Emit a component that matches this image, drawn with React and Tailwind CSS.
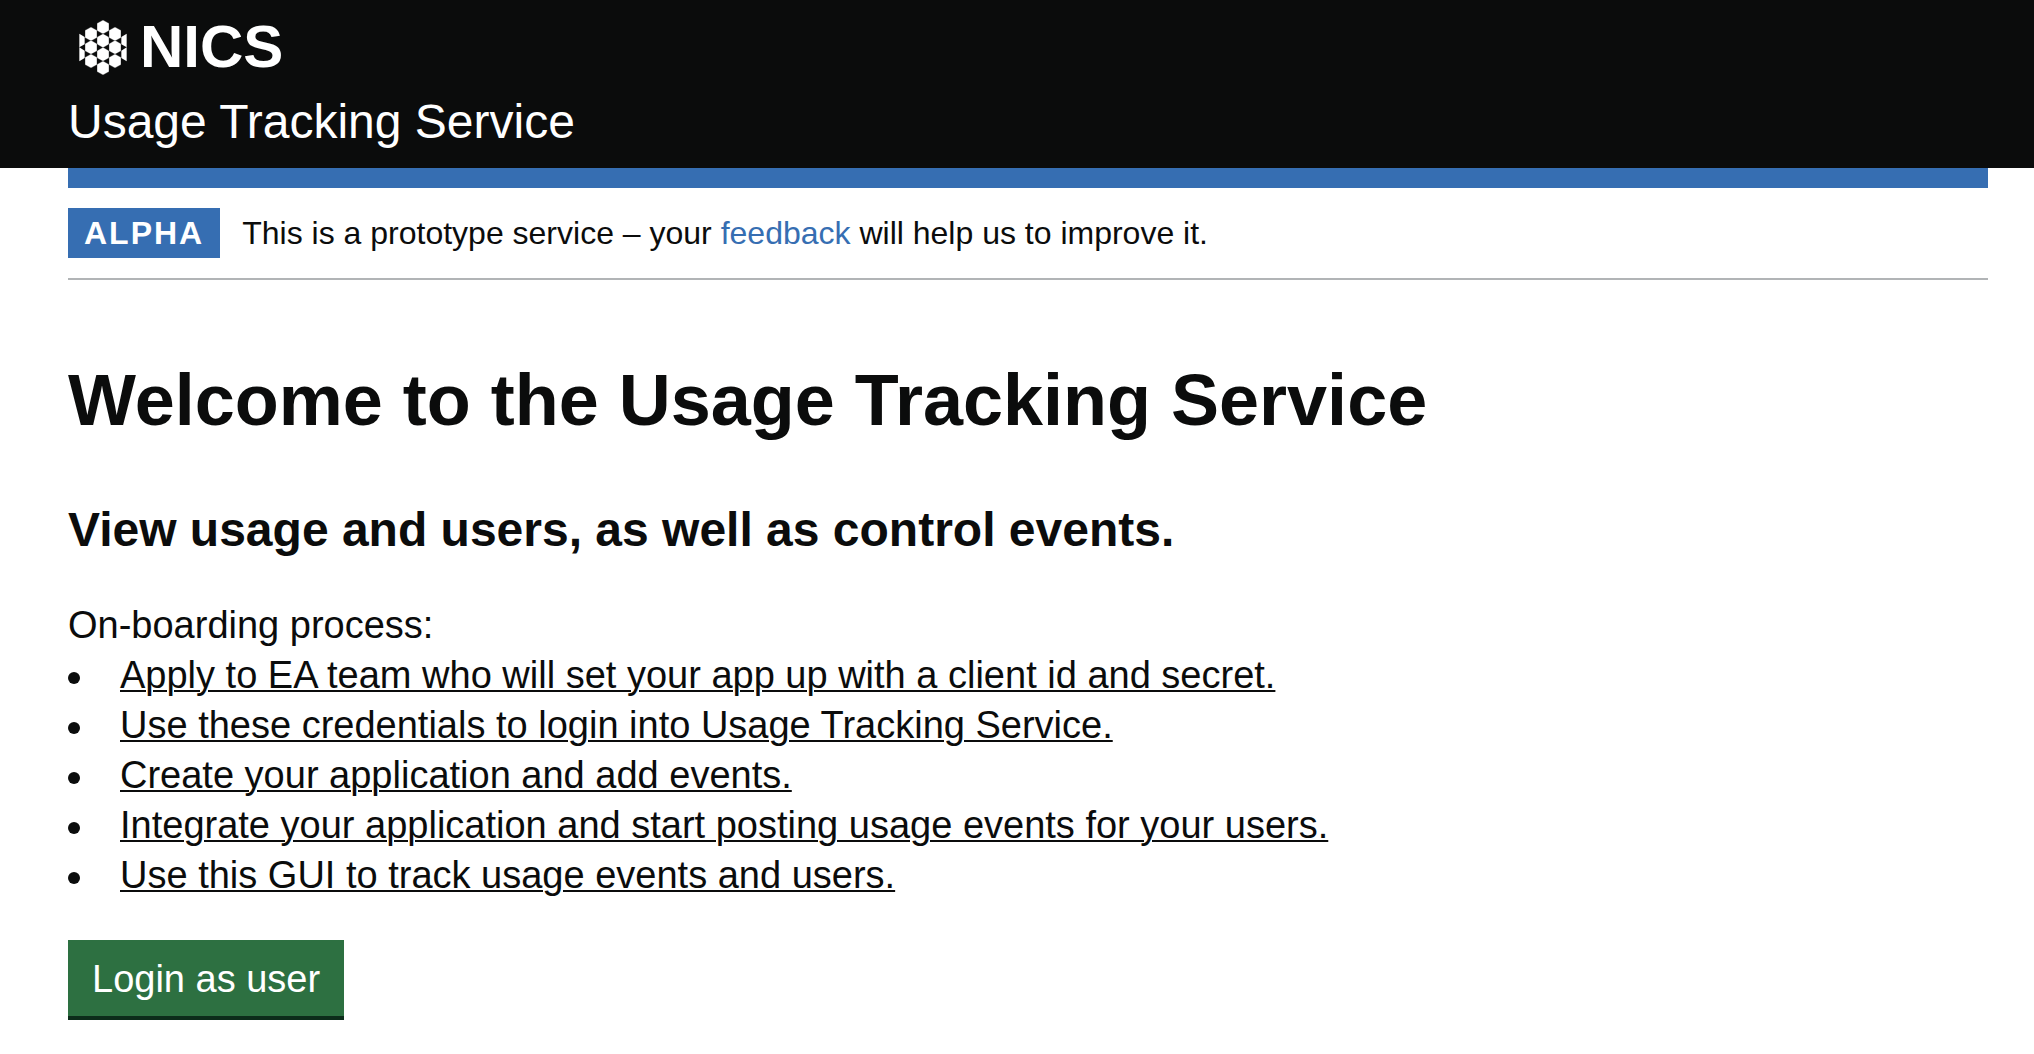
const steps = [
  "Apply to EA team who will set your app up with a client id and secret.",
  "Use these credentials to login into Usage Tracking Service.",
  "Create your application and add events.",
  "Integrate your application and start posting usage events for your users.",
  "Use this GUI to track usage events and users.",
];

const hexagons = [
  [72, 21], [72, 62], [72, 103], [72, 144],
  [36, 42], [36, 82], [36, 123],
  [108, 42], [108, 82], [108, 123],
];

function hexPoints([x, y]) {
  return `${x},${y - 21} ${x + 18},${y - 11} ${x + 18},${y + 11} ${x},${y + 21} ${x - 18},${y + 11} ${x - 18},${y - 11}`;
}

function HexLogo() {
  return (
    <svg viewBox="0 0 144 165" className="h-[55px] w-[48px]" fill="white" stroke="#0b0c0c" strokeWidth="1" aria-hidden="true">
      {hexagons.map((h) => (
        <polygon key={h.join()} points={hexPoints(h)} />
      ))}
      <path d="M1 41L17 51V73L1 82Z M1 82L17 92V114L1 124Z M143 41L127 51V73L143 82Z M143 82L127 92V114L143 124Z" stroke="none" />
    </svg>
  );
}

export default function App() {
  return (
    <div className="min-h-screen bg-white font-['Liberation_Sans',Arial,sans-serif] text-[38px] leading-[50px] text-[#0b0c0c]">
      <header className="bg-[#0b0c0c] pt-[17px] pr-[46px] pb-4 pl-[68px] text-white">
        <a href="#home" className="ml-[11px] flex w-fit items-center gap-[13px] text-[60px] leading-[60px] font-bold">
          <HexLogo />
          NICS
        </a>
        <a href="#service" className="mt-[15px] block w-fit text-[48px] leading-[60px]">
          Usage Tracking Service
        </a>
      </header>

      <div className="mr-[46px] ml-[68px]">
        <div className="h-5 bg-[#366eb2]" />
        <div className="flex items-center gap-[22px] border-b-2 border-[#b1b4b6] py-5 text-[32px] leading-[50px]">
          <strong className="bg-[#366eb2] px-4 tracking-[2px] text-white">ALPHA</strong>
          <p>
            This is a prototype service – your{" "}
            <a href="#feedback" className="text-[#366eb2]">feedback</a> will help us to improve it.
          </p>
        </div>

        <main className="pt-20">
          <h1 className="mb-[60px] text-[72px] leading-[80px] font-bold">Welcome to the Usage Tracking Service</h1>
          <h2 className="mb-10 text-[48px] leading-[60px] font-bold">View usage and users, as well as control events.</h2>
          <p>On-boarding process:</p>
          <ul>
            {steps.map((step) => (
              <li key={step} className="flex items-center gap-10">
                <span className="mt-[6px] size-3 rounded-full bg-[#0b0c0c]" />
                <span className="underline decoration-2 underline-offset-2">{step}</span>
              </li>
            ))}
          </ul>
          <button type="button" className="mt-10 bg-[#2d7041] px-6 pt-5 pb-[18px] leading-[38px] text-white shadow-[0_4px_0_#0c2c1a]">
            Login as user
          </button>
        </main>
      </div>
    </div>
  );
}
